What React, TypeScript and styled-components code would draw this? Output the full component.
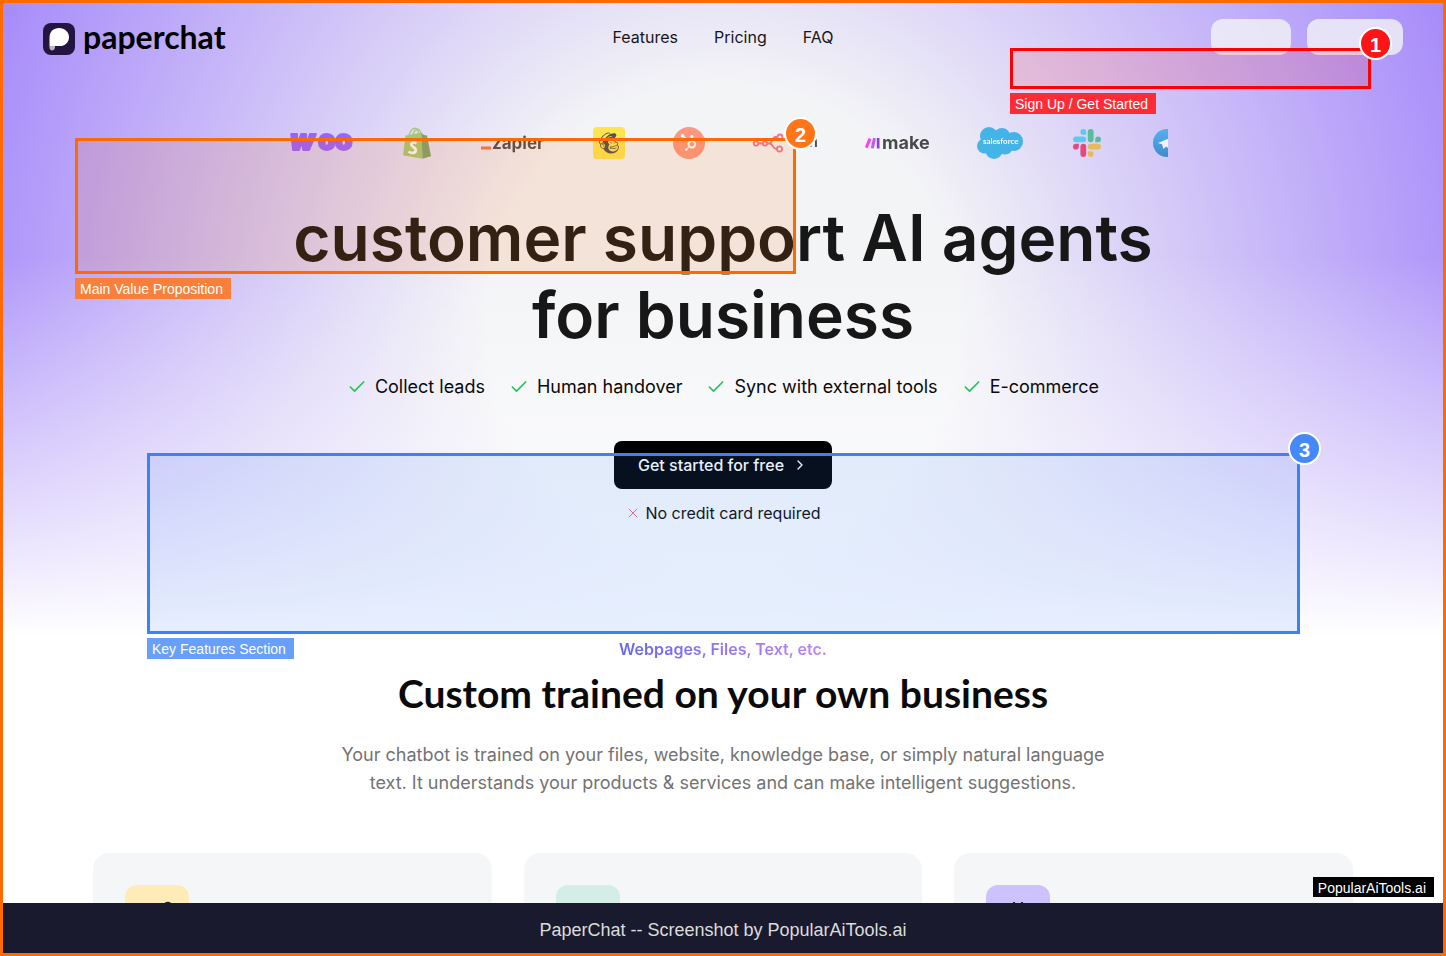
import React from "react";
import styled, { createGlobalStyle } from "styled-components";
import { Check, ChevronRight, X } from "lucide-react";
import { FaHubspot, FaMailchimp } from "react-icons/fa";

const GlobalStyle = createGlobalStyle`
  * { box-sizing: border-box; }
  body { margin: 0; background: #fff; color: #0a0a0a; font: 400 16px/24px Inter, sans-serif; }
  h1, h2, p, ul { margin: 0; padding: 0; }
`;

const Frame = styled.div`
  position: relative;
  display: flex;
  flex-direction: column;
  height: 100vh;
  overflow: hidden;
  border: 3px solid #ff6a00;
`;

const Page = styled.main`
  flex: 1;
  min-height: 0;
  overflow: hidden;
`;

const Hero = styled.section`
  padding-bottom: 112px;
  background:
    linear-gradient(to bottom, rgba(255, 255, 255, 0) 40%, #fff 100%),
    radial-gradient(circle at center, #f3f4f6 30%, #a78bfa 100%);
`;

const Header = styled.header`
  display: grid;
  grid-template-columns: 1fr auto 1fr;
  align-items: center;
  padding: 16px 40px;
`;

const Brand = styled.a`
  display: flex;
  align-items: center;
  gap: 8px;
  height: 36px;
  padding-top: 4px;
  color: #000;
  text-decoration: none;
  font: 700 32px/28px Lato, sans-serif;
`;

const BrandName = styled.span`
  padding-bottom: 4px;
`;

const Nav = styled.nav`
  display: flex;
  gap: 36px;
`;

const NavLink = styled.a`
  color: #171717;
  text-decoration: none;
`;

const Placeholders = styled.div`
  display: flex;
  justify-content: flex-end;
  gap: 16px;
`;

const Placeholder = styled.div<{ $width: number }>`
  width: ${(p) => p.$width}px;
  height: 36px;
  border-radius: 12px;
  background: rgba(243, 244, 246, 0.8);
`;

const LogoStrip = styled.div`
  display: flex;
  align-items: center;
  gap: 48px;
  max-width: 890px;
  height: 32px;
  margin: 56px auto 40px;
  padding-left: 11px;
  overflow: hidden;
  opacity: 0.75;
`;

const Logo = styled.div<{ $width: number }>`
  display: flex;
  flex: none;
  align-items: center;
  justify-content: center;
  width: ${(p) => p.$width}px;
  height: 32px;
  svg { overflow: visible; }
`;

const Headline = styled.h1`
  max-width: 960px;
  margin: 0 auto;
  color: #171717;
  text-align: center;
  font: 600 64px/77px Inter, sans-serif;
`;

const Benefits = styled.ul`
  display: flex;
  flex-wrap: wrap;
  justify-content: center;
  gap: 24px;
  margin: 20px 0 40px;
  list-style: none;
`;

const Benefit = styled.li`
  display: flex;
  align-items: center;
  gap: 8px;
  font-size: 18px;
  line-height: 28px;
`;

const Actions = styled.div`
  display: flex;
  flex-direction: column;
  align-items: center;
  gap: 12px;
`;

const StartButton = styled.button`
  display: flex;
  align-items: center;
  gap: 8px;
  height: 48px;
  padding: 0 24px;
  border: 0;
  border-radius: 8px;
  background: #000;
  color: #fff;
  font: 500 16px/24px Inter, sans-serif;
`;

const Note = styled.p`
  display: flex;
  align-items: center;
  gap: 4px;
`;

const Training = styled.section`
  display: flex;
  flex-direction: column;
  align-items: center;
  text-align: center;
`;

const Eyebrow = styled.p`
  font-weight: 600;
  color: transparent;
  background: linear-gradient(to right, #6366f1, #c084fc);
  background-clip: text;
  -webkit-background-clip: text;
`;

const Title = styled.h2`
  margin: 8px 0 24px;
  color: #0a0a0a;
  font: 700 39px/48px Lato, sans-serif;
`;

const Lead = styled.p`
  max-width: 768px;
  color: #737373;
  font-size: 18px;
  line-height: 28px;
`;

const Cards = styled.div`
  display: grid;
  grid-template-columns: repeat(3, 1fr);
  gap: 32px;
  width: 100%;
  max-width: 1260px;
  margin-top: 56px;
`;

const Card = styled.article`
  height: 320px;
  padding: 32px;
  border-radius: 16px;
  background: #f5f6f8;
`;

const Tile = styled.div<{ $color: string }>`
  display: grid;
  place-items: center;
  width: 64px;
  height: 64px;
  border-radius: 12px;
  background: ${(p) => p.$color};
`;

const Caption = styled.footer`
  position: relative;
  flex: none;
  padding: 15px 0 11px;
  background: #1a1a2e;
  color: #dcdcdc;
  text-align: center;
  font: 18px/24px "Liberation Sans", sans-serif;
`;

const Watermark = styled.span`
  position: absolute;
  right: 9px;
  bottom: 56px;
  padding: 3px 8px 1px 5px;
  background: #000;
  color: #fff;
  font: 14px/16px "Liberation Sans", sans-serif;
`;

const Region = styled.div<{
  $rgb: string; $left: string; $top: number; $width: string; $height: number;
}>`
  position: absolute;
  left: ${(p) => p.$left};
  top: ${(p) => p.$top}px;
  width: ${(p) => p.$width};
  height: ${(p) => p.$height}px;
  border: 3px solid rgb(${(p) => p.$rgb});
  background: rgba(${(p) => p.$rgb}, 0.12);
  background-clip: padding-box;
`;

const Marker = styled.span<{ $color: string }>`
  position: absolute;
  top: -24px;
  right: -24px;
  width: 33px;
  height: 33px;
  border: 2px solid #fff;
  border-radius: 50%;
  background: ${(p) => p.$color};
  color: #fff;
  text-align: center;
  font: 700 20px/32px "Liberation Sans", sans-serif;
`;

const Label = styled.span<{ $color: string }>`
  position: absolute;
  top: calc(100% + 7px);
  left: -3px;
  padding: 3px 8px 2px 5px;
  background: ${(p) => p.$color};
  color: #fff;
  white-space: nowrap;
  font: 14px/16px "Liberation Sans", sans-serif;
`;

const svgFont = "Inter, sans-serif";

function BrandMark() {
  return (
    <svg width="32" height="32" viewBox="0 0 32 32" aria-hidden="true">
      <rect width="32" height="32" rx="8" fill="#241442" />
      <path d="M6.500 23V14.500C6.500 8.800 10.400 5 16 5s10 4 10 9.200S22 23 16.500 23z" fill="#fff" />
      <path d="M6.500 23h5.500v1.500a3.500 3.500 0 0 1-2.500 3c-1.800 0-3-1.200-3-3z" fill="#b9b6be" />
    </svg>
  );
}

function WooLogo() {
  return (
    <svg width="64" height="32" viewBox="0 0 64 32" aria-label="Woo">
      <text x="1" y="23" fontFamily={svgFont} fontWeight="900" fontSize="28" fill="#873eff" stroke="#873eff" strokeWidth="2" strokeLinejoin="round">
        <tspan fontStyle="italic">w</tspan>
        <tspan x="29">o</tspan>
        <tspan x="46">o</tspan>
      </text>
    </svg>
  );
}

function ShopifyLogo() {
  return (
    <svg width="32" height="32" viewBox="0 0 32 32" aria-label="Shopify">
      <path d="M4.500 8.500l16-3 1 26.300L2 28.300z" fill="#95bf47" />
      <path d="M20.300 5.500l2.500 2.500 3.200.5 4 20.800-8.500 2.500z" fill="#5e8e3e" />
      <path d="M8 8.500C9 4 12 .8 14.500 1.300c2 .5 3 3 3 5.700M12 7.500C13 3.500 16 1.500 17.500 2.300c1.300.7 2 2.200 2.200 4" fill="none" stroke="#95bf47" strokeWidth="1.300" />
      <path d="M15.500 16.200c-2.500-1.400-5-.8-5.200 1.300-.2 2.700 5 2.900 4.500 6-.4 2.800-4.300 3.300-7.300 1" fill="none" stroke="#fff" strokeWidth="2.800" />
    </svg>
  );
}

function ZapierLogo() {
  return (
    <svg width="64" height="32" viewBox="0 0 64 32" aria-label="Zapier">
      <path d="M0 19.500h10v3H0z" fill="#ff4f00" />
      <text x="11" y="22" fontFamily={svgFont} fontWeight="700" fontSize="17" fill="#201515">zapier</text>
    </svg>
  );
}

function MailchimpLogo() {
  return (
    <svg width="32" height="32" viewBox="0 0 32 32" aria-label="Mailchimp">
      <rect width="32" height="32" rx="4" fill="#ffe01b" />
      <FaMailchimp x={4} y={4} size={24} color="#1e1e1c" />
    </svg>
  );
}

function HubspotLogo() {
  return (
    <svg width="32" height="32" viewBox="0 0 32 32" aria-label="HubSpot">
      <circle cx="16" cy="16" r="16" fill="#ff7a59" />
      <FaHubspot x={7} y={7} size={17} color="#fff" />
    </svg>
  );
}

function N8nLogo() {
  return (
    <svg width="64" height="32" viewBox="0 0 64 32" aria-label="n8n">
      <g fill="none" stroke="#ea4b71" strokeWidth="1.800">
        <circle cx="3" cy="16.500" r="2.200" />
        <circle cx="12" cy="16.500" r="2.200" />
        <circle cx="27" cy="10" r="2.500" />
        <circle cx="26.500" cy="22" r="2.600" />
        <path d="M5.200 16.500h4.600M14.200 16.500h2.300c3 0 2-6.500 6-6.500h2M16.500 16.500c3.500 0 3 5.500 7.300 5.500" />
      </g>
      <text x="37" y="20" fontFamily={svgFont} fontWeight="600" fontSize="15" fill="#101330">n8n</text>
    </svg>
  );
}

function MakeLogo() {
  return (
    <svg width="64" height="32" viewBox="0 0 64 32" aria-label="Make">
      <path d="M3.500 11l3 1.200-4 9.300L0 20z" fill="#ff00ff" />
      <path d="M8 10.800l3 .6-2.200 10.100-3-.6z" fill="#b02de9" />
      <path d="M11.800 11h2.700v10.500h-2.700z" fill="#6d00cc" />
      <text x="17" y="22" fontFamily={svgFont} fontWeight="700" fontSize="18" fill="#111">make</text>
    </svg>
  );
}

function SlackLogo() {
  return (
    <svg width="28" height="28" viewBox="0 0 28 28" aria-label="Slack">
      <path d="M10.300 0a2.900 2.900 0 0 1 2.900 2.900v2.900h-2.900a2.900 2.900 0 0 1 0-5.800zM2.900 7.400h7.400a2.900 2.900 0 0 1 0 5.800H2.900a2.900 2.900 0 0 1 0-5.800z" fill="#36c5f0" />
      <path d="M28 10.300a2.900 2.900 0 0 1-2.900 2.900h-2.900v-2.900a2.900 2.900 0 0 1 5.800 0zM20.600 2.900v7.400a2.900 2.900 0 0 1-5.800 0V2.900a2.900 2.900 0 0 1 5.800 0z" fill="#2eb67d" />
      <path d="M17.700 28a2.900 2.900 0 0 1-2.900-2.900v-2.900h2.900a2.900 2.900 0 0 1 0 5.800zM25.100 20.600h-7.400a2.900 2.900 0 0 1 0-5.800h7.400a2.900 2.900 0 0 1 0 5.800z" fill="#ecb22e" />
      <path d="M0 17.700a2.900 2.900 0 0 1 2.900-2.900h2.900v2.900a2.900 2.900 0 0 1-5.800 0zM7.400 25.100v-7.400a2.900 2.900 0 0 1 5.800 0v7.400a2.900 2.900 0 0 1-5.800 0z" fill="#e01e5a" />
    </svg>
  );
}

function SalesforceLogo() {
  return (
    <svg width="46" height="32" viewBox="0 0 46 32" aria-label="Salesforce">
      <g fill="#0ea5e3">
        <circle cx="12" cy="9" r="9" />
        <circle cx="25" cy="9" r="8" />
        <circle cx="36.500" cy="14.500" r="9.500" />
        <circle cx="7.500" cy="19" r="7.500" />
        <circle cx="17" cy="23.500" r="8.500" />
        <circle cx="28" cy="19.500" r="8" />
      </g>
      <text x="6" y="17" fontFamily="Lato, sans-serif" fontWeight="700" fontSize="8" fill="#fff">salesforce</text>
    </svg>
  );
}

function TelegramLogo() {
  return (
    <svg width="28" height="28" viewBox="0 0 28 28" aria-label="Telegram">
      <defs>
        <linearGradient id="telegram" x2="0" y2="1">
          <stop stopColor="#2aabee" />
          <stop offset="1" stopColor="#0d78bd" />
        </linearGradient>
      </defs>
      <circle cx="14" cy="14" r="14" fill="url(#telegram)" />
      <path d="M5 14L20.500 7.500l-2.600 13.500-4.800-3.500-2.600 2.600-1.500-4.900z" fill="#fff" />
    </svg>
  );
}

const benefits = ["Collect leads", "Human handover", "Sync with external tools", "E-commerce"];

export default function App() {
  return (
    <Frame>
      <GlobalStyle />
      <Page>
        <Hero>
          <Header>
            <Brand href="#"><BrandMark /><BrandName>paperchat</BrandName></Brand>
            <Nav>
              <NavLink href="#features">Features</NavLink>
              <NavLink href="#pricing">Pricing</NavLink>
              <NavLink href="#faq">FAQ</NavLink>
            </Nav>
            <Placeholders>
              <Placeholder $width={80} />
              <Placeholder $width={96} />
            </Placeholders>
          </Header>
          <LogoStrip>
            <Logo $width={64}><WooLogo /></Logo>
            <Logo $width={32}><ShopifyLogo /></Logo>
            <Logo $width={64}><ZapierLogo /></Logo>
            <Logo $width={32}><MailchimpLogo /></Logo>
            <Logo $width={32}><HubspotLogo /></Logo>
            <Logo $width={64}><N8nLogo /></Logo>
            <Logo $width={64}><MakeLogo /></Logo>
            <Logo $width={46}><SalesforceLogo /></Logo>
            <Logo $width={32}><SlackLogo /></Logo>
            <Logo $width={32}><TelegramLogo /></Logo>
          </LogoStrip>
          <Headline>customer support AI agents<br />for business</Headline>
          <Benefits>
            {benefits.map((text) => (
              <Benefit key={text}><Check size={20} strokeWidth={2} color="#22c55e" />{text}</Benefit>
            ))}
          </Benefits>
          <Actions>
            <StartButton type="button">Get started for free<ChevronRight size={16} /></StartButton>
            <Note><X size={16} strokeWidth={1} color="#ef233c" />No credit card required</Note>
          </Actions>
        </Hero>
        <Training id="features">
          <Eyebrow>Webpages, Files, Text, etc.</Eyebrow>
          <Title>Custom trained on your own business</Title>
          <Lead>
            Your chatbot is trained on your files, website, knowledge base, or simply natural language
            text. It understands your products &amp; services and can make intelligent suggestions.
          </Lead>
          <Cards>
            <Card>
              <Tile $color="#ffebb8">
                <svg width="32" height="32" viewBox="0 0 32 32" fill="none" stroke="#27272a" strokeWidth="2" aria-hidden="true">
                  <path d="M4 28l2-8L23 4c2-3 6-3 7 0s0 4-2 6L12 26z" />
                </svg>
              </Tile>
            </Card>
            <Card>
              <Tile $color="#d4ede6">
                <svg width="32" height="32" viewBox="0 0 32 32" fill="none" stroke="#27272a" strokeWidth="2" aria-hidden="true">
                  <circle cx="16" cy="16" r="10" />
                </svg>
              </Tile>
            </Card>
            <Card>
              <Tile $color="#cdc2ff">
                <svg width="32" height="32" viewBox="0 0 32 32" fill="none" stroke="#27272a" strokeWidth="2" aria-hidden="true">
                  <path d="M12 1v6M20 1v6M6 8h20v18H6z" />
                </svg>
              </Tile>
            </Card>
          </Cards>
        </Training>
      </Page>
      <Caption>
        PaperChat -- Screenshot by PopularAiTools.ai
        <Watermark>PopularAiTools.ai</Watermark>
      </Caption>

      <Region $rgb="255, 0, 0" $left="calc(70% - 1px)" $top={45} $width="calc(25% + 1px)" $height={41}>
        <Marker $color="#ff1418">1</Marker>
        <Label $color="#fb2c36">Sign Up / Get Started</Label>
      </Region>
      <Region $rgb="255, 106, 0" $left="5%" $top={135} $width="calc(50% + 1px)" $height={136}>
        <Marker $color="#ff7518">2</Marker>
        <Label $color="#f97f3a">Main Value Proposition</Label>
      </Region>
      <Region $rgb="59, 130, 246" $left="10%" $top={450} $width="calc(80% + 1px)" $height={181}>
        <Marker $color="#4489f7">3</Marker>
        <Label $color="#689ff9">Key Features Section</Label>
      </Region>
    </Frame>
  );
}
